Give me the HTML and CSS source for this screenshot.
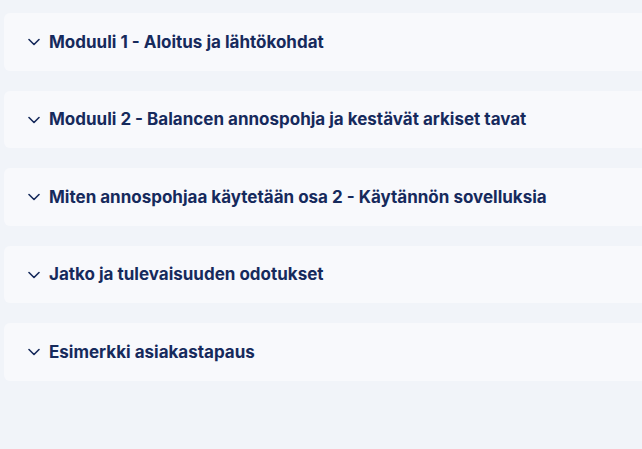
FILE: index.html
```html
<!DOCTYPE html>
<html lang="fi">
<head>
<meta charset="utf-8">
<link rel="stylesheet" href="styles.css">
</head>
<body>
<div class="list">
  <div class="item"><svg class="chev" viewBox="0 0 12 8"><path d="M1 1.5 L6 6.5 L11 1.5" fill="none" stroke="currentColor" stroke-width="1.6" stroke-linecap="round" stroke-linejoin="round"/></svg><span class="title">Moduuli 1 - Aloitus ja lähtökohdat</span></div>
  <div class="item"><svg class="chev" viewBox="0 0 12 8"><path d="M1 1.5 L6 6.5 L11 1.5" fill="none" stroke="currentColor" stroke-width="1.6" stroke-linecap="round" stroke-linejoin="round"/></svg><span class="title">Moduuli 2 - Balancen annospohja ja kestävät arkiset tavat</span></div>
  <div class="item"><svg class="chev" viewBox="0 0 12 8"><path d="M1 1.5 L6 6.5 L11 1.5" fill="none" stroke="currentColor" stroke-width="1.6" stroke-linecap="round" stroke-linejoin="round"/></svg><span class="title">Miten annospohjaa käytetään osa 2 - Käytännön sovelluksia</span></div>
  <div class="item"><svg class="chev" viewBox="0 0 12 8"><path d="M1 1.5 L6 6.5 L11 1.5" fill="none" stroke="currentColor" stroke-width="1.6" stroke-linecap="round" stroke-linejoin="round"/></svg><span class="title">Jatko ja tulevaisuuden odotukset</span></div>
  <div class="item"><svg class="chev" viewBox="0 0 12 8"><path d="M1 1.5 L6 6.5 L11 1.5" fill="none" stroke="currentColor" stroke-width="1.6" stroke-linecap="round" stroke-linejoin="round"/></svg><span class="title">Esimerkki asiakastapaus</span></div>
</div>
</body>
</html>
```
FILE: styles.css
```css
html, body {
  margin: 0;
  padding: 0;
  background: #f1f4f9;
  overflow: hidden;
  height: 100%;
}
body {
  font-family: Inter, "Noto Sans", sans-serif;
  color: #162a5c;
}
.list {
  display: flex;
  flex-direction: column;
  gap: 20px;
  padding: 13px 0 0 4px;
  margin-right: -20px;
}
.item {
  display: flex;
  align-items: center;
  height: 57.5px;
  box-sizing: border-box;
  padding-left: 24px;
  background: #f8f9fc;
  border-radius: 6px;
}
.chev {
  flex: none;
  width: 12px;
  height: 8px;
  margin-right: 9px;
  margin-top: 1px;
}
.title {
  font-size: 17px;
  font-weight: 700;
}
```
